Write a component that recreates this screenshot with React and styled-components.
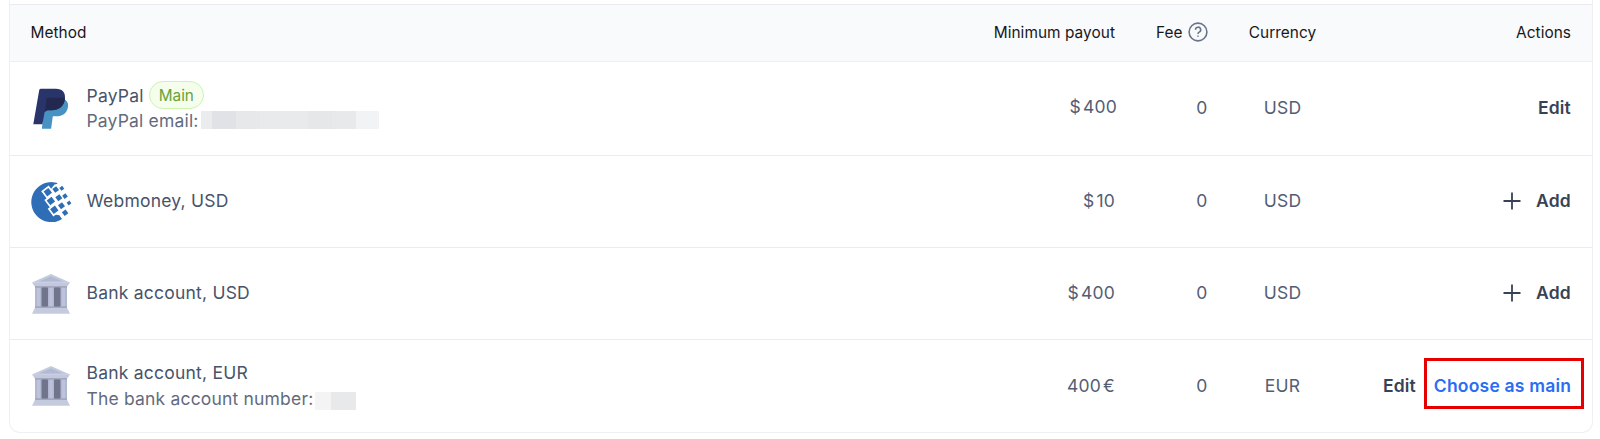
import React from 'react';
import styled, { createGlobalStyle, css } from 'styled-components';

const GlobalStyle = createGlobalStyle`
  * {
    box-sizing: border-box;
  }
  body {
    margin: 0;
    background: #fff;
    font-family: Inter, "Liberation Sans", sans-serif;
  }
`;

const Page = styled.main`
  height: 439px;
  padding: 0 7px 6px 9px;
  overflow: hidden;
`;

const Panel = styled.section`
  height: 433px;
  padding-top: 4px;
  border: 1px solid #eff0f3;
  border-top: 0;
  border-radius: 0 0 11px 11px;
  overflow: hidden;
`;

const columns = css`
  display: grid;
  grid-template-columns: 855px 229.5px 92.5px 133px 1fr;
  align-items: center;
  padding: 0 21px 0 20.5px;
`;

const Header = styled.div`
  ${columns}
  height: 58px;
  padding-bottom: 2px;
  border-top: 1px solid #eaebf2;
  border-bottom: 1px solid #eeeff4;
  background: #f9fafc;
  color: #17181a;
  font-size: 15.4px;
  letter-spacing: 0.05px;
`;

const Row = styled.div`
  ${columns}
  height: ${props => props.$height || 92}px;
  border-bottom: 1px solid #ebecee;
  color: #535d73;
  font-size: 17.5px;
  letter-spacing: 0.22px;
  &:last-child {
    border-bottom: 0;
  }
`;

const Cell = styled.div`
  display: flex;
  align-items: center;
  justify-content: flex-end;
  padding-bottom: 2px;
  white-space: pre;
`;

const PayoutCell = styled(Cell)`
  gap: 2px;
  margin-right: ${props => (props.$main ? -2 : 0)}px;
  padding-bottom: ${props => (props.$main ? 4 : 2)}px;
`;

const CurrencyCell = styled(Cell)`
  justify-content: center;
  padding-left: 17px;
`;

const HeaderCell = styled(Cell)`
  padding-bottom: 0;
`;

const HeaderCurrency = styled(CurrencyCell)`
  padding-bottom: 0;
`;

const Method = styled.div`
  display: flex;
  align-items: center;
  gap: 16px;
`;

const Logo = styled.svg`
  display: block;
  flex: none;
  width: 40px;
  height: 42px;
  overflow: visible;
`;

const Details = styled.div`
  display: flex;
  flex-direction: column;
  padding-bottom: 2px;
`;

const Title = styled.div`
  display: flex;
  align-items: center;
  gap: 5px;
  height: 26px;
  color: #48536a;
`;

const Note = styled(Title)`
  height: 25px;
  gap: ${props => props.$gap}px;
  color: #626b7d;
  letter-spacing: 0.18px;
`;

const Badge = styled.span`
  height: 28px;
  padding: 0 9px;
  border: 1px solid #cdf5ad;
  border-radius: 14px;
  background: #f5fdec;
  color: #66a33a;
  font-size: 15.3px;
  letter-spacing: 0;
  line-height: 27px;
`;

const Redacted = styled.span`
  display: flex;
  height: 18px;
  margin-top: ${props => props.$drop}px;
`;

const Block = styled.i`
  width: ${props => props.$width}px;
  background: ${props => props.$tone};
`;

const Action = styled.button`
  display: flex;
  align-items: center;
  gap: 15px;
  padding: 0;
  border: 0;
  background: none;
  color: ${props => (props.$primary ? '#2a6df4' : '#384256')};
  font: inherit;
  font-weight: 600;
  letter-spacing: 0.2px;
`;

const Highlight = styled.div`
  display: flex;
  align-items: center;
  justify-content: center;
  width: 160px;
  height: 51px;
  margin: -4px -13px 0 8px;
  padding: 4px 3px 0 0;
  border: 3px solid #e60000;
`;

const HelpIcon = styled.svg`
  width: 20px;
  height: 20px;
  margin-left: 5px;
`;

const PayPalLogo = () => (
  <Logo viewBox="0 0 40 42">
    <path d="M14 12h20.500c2.600 2 3 4.800 2.400 7.500-1.300 6-5.600 8.800-11.400 8.800h-3.700l-1.700 12.500h-9.200z" fill="#4792c3" />
    <path d="M10 .800h14.800c6.700 0 10 4 9.100 10.200-1 7.200-5.900 11.300-13.100 11.300h-5.600l-1.600 2-2.200 12H2.300L8.200 2.200Q8.500.800 10 .800z" fill="#28346a" />
    <path d="M16.500 9.700H33q1 .4.900 1.600c-1 7-6 11-13.200 11h-4.200l-2.500 1.500 1.500-12.700q.2-1.400 1-1.400z" fill="#22284f" />
  </Logo>
);

// x, y, size of the checkered squares, largest on the left
const tiles = [
  [17.3, 11.7, 6], [20.4, 20.5, 6], [23.8, 29.3, 6],
  [25.2, 9, 4.8], [28.3, 17.2, 5], [31, 25.2, 5],
  [31.3, 7.8, 3.6], [34.5, 15.6, 4], [38.5, 22.5, 3.4], [34.6, 32.2, 4.6],
];

const WebmoneyLogo = () => (
  <Logo viewBox="0.500 0.500 40 42">
    <path d="M27 2.600A20 20 0 1 0 31.500 38.500L29 35l-2-16-4-10z" fill="#2f6eb6" />
    <path d="M20 9l4-5 5-1 9 27-7 5-7-1-4-12z" fill="#fff" />
    {tiles.slice(0, 3).map(([x, y]) => (
      <rect key={y} x="-4.700" y="-4.700" width="9.400" height="9.400" fill="#fff" transform={`translate(${x} ${y}) rotate(-37)`} />
    ))}
    {tiles.map(([x, y, size]) => (
      <rect key={y} x={-size / 2} y={-size / 2} width={size} height={size} fill="#2f6eb6" transform={`translate(${x} ${y}) rotate(-37)`} />
    ))}
  </Logo>
);

const BankLogo = () => (
  <Logo viewBox="0 0.500 40 42">
    <path d="M4 13h32v23H4z" fill="#b2b8d0" />
    <path d="M6 15h3v19H6zM18.500 15h3v19h-3zM31 15h3v19h-3z" fill="#bdc3dc" />
    <rect x="10.500" y="14" width="6.500" height="21" rx="2" fill="#71758b" />
    <rect x="23" y="14" width="6.500" height="21" rx="2" fill="#71758b" />
    <path d="M4 13.500h32v1.500H4zM4 34h32v1.500H4z" fill="#989db5" />
    <path d="M20 1.500L39 10H1z" fill="#c5cbdf" />
    <path d="M20 3.800L32 9H8z" fill="#b2bad3" />
    <path d="M1 9.800h38l-2.500 4h-33z" fill="#c2c8dd" />
    <path d="M4 35.300h32l3 6H1z" fill="#c5cbdf" />
  </Logo>
);

const emailBlocks = [[11, '#ebecee'], [24, '#e1e2e5'], [24, '#e7e8ea'], [48, '#e9eaec'], [24, '#e6e7e9'], [24, '#e8e9eb'], [23, '#f2f3f5']];
const accountBlocks = [[16, '#f4f4f5'], [25, '#e8e9eb']];

const Mosaic = ({ blocks, drop }) => (
  <Redacted $drop={drop}>
    {blocks.map(([width, tone], i) => <Block key={i} $width={width} $tone={tone} />)}
  </Redacted>
);

const AddAction = () => (
  <Action>
    <svg width="18" height="18" viewBox="0 0 18 18" fill="none" stroke="#384256" strokeWidth="1.800">
      <path d="M9 .5v17M.5 9h17" />
    </svg>
    Add
  </Action>
);

const methods = [
  { name: 'PayPal', logo: PayPalLogo, main: true, note: 'PayPal email:', blocks: emailBlocks, drop: -1, gap: 2.5, payout: ['$', '400'], currency: 'USD', action: 'edit', height: 94 },
  { name: 'Webmoney, USD', logo: WebmoneyLogo, payout: ['$', '10'], currency: 'USD', action: 'add' },
  { name: 'Bank account, USD', logo: BankLogo, payout: ['$', '400'], currency: 'USD', action: 'add' },
  { name: 'Bank account, EUR', logo: BankLogo, note: 'The bank account number:', blocks: accountBlocks, drop: 5, gap: 2, payout: ['400', '€'], currency: 'EUR', action: 'choose' },
];

const PayoutMethod = ({ name, logo: Icon, main, note, blocks, drop, gap, payout, currency, action, height }) => (
  <Row $height={height}>
    <Method>
      <Icon />
      <Details>
        <Title>
          {name}
          {main && <Badge>Main</Badge>}
        </Title>
        {note && <Note $gap={gap}>{note}<Mosaic blocks={blocks} drop={drop} /></Note>}
      </Details>
    </Method>
    <PayoutCell $main={main}>
      {payout.map(part => <span key={part}>{part}</span>)}
    </PayoutCell>
    <Cell>0</Cell>
    <CurrencyCell>{currency}</CurrencyCell>
    <Cell>
      {action === 'add' ? <AddAction /> : <Action>Edit</Action>}
      {action === 'choose' && <Highlight><Action $primary>Choose as main</Action></Highlight>}
    </Cell>
  </Row>
);

const App = () => (
  <>
    <GlobalStyle />
    <Page>
      <Panel>
        <Header>
          <div>Method</div>
          <HeaderCell>Minimum payout</HeaderCell>
          <HeaderCell>
            Fee
            <HelpIcon viewBox="0 0 20 20" fill="none" stroke="#69748b" strokeWidth="1.600">
              <circle cx="10" cy="10" r="8.900" />
              <path d="M7.500 7.800a2.600 2.600 0 1 1 3.700 2.300c-.9.400-1.200.9-1.200 1.800M10 13.400v1.400" />
            </HelpIcon>
          </HeaderCell>
          <HeaderCurrency>Currency</HeaderCurrency>
          <HeaderCell>Actions</HeaderCell>
        </Header>
        {methods.map(method => <PayoutMethod key={method.name} {...method} />)}
      </Panel>
    </Page>
  </>
);

export default App;
